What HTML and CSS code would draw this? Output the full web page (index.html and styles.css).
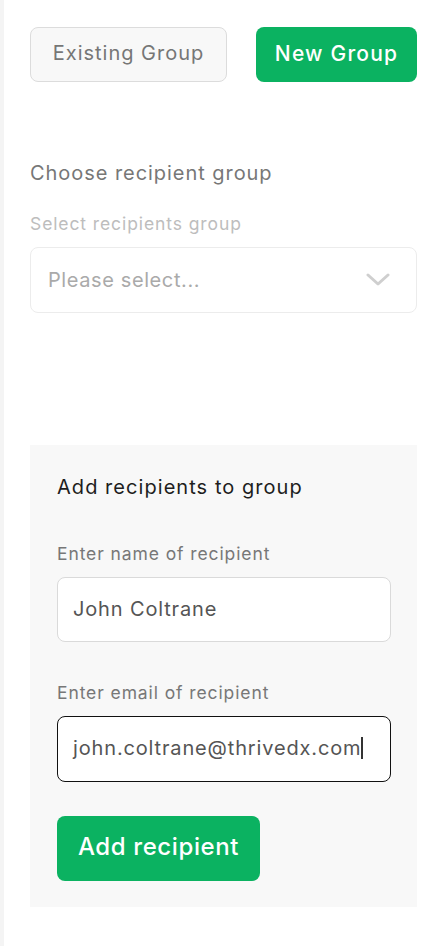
FILE: index.html
```html
<!DOCTYPE html>
<html>
<head>
<meta charset="utf-8">
<link rel="stylesheet" href="styles.css">
</head>
<body>
<div class="edge"></div>
<main class="page">
  <div class="tabs">
    <button class="btn btn-outline">Existing Group</button>
    <button class="btn btn-green">New Group</button>
  </div>
  <section class="choose">
    <h2 class="title">Choose recipient group</h2>
    <label class="hint">Select recipients group</label>
    <div class="select">
      <span class="placeholder">Please select...</span>
      <svg class="chev" width="24" height="14" viewBox="0 0 24 14"><path d="M2 2 L12 11 L22 2" fill="none" stroke="#cfcfcf" stroke-width="3" stroke-linecap="round" stroke-linejoin="round"/></svg>
    </div>
  </section>
  <section class="panel">
    <h3 class="panel-title">Add recipients to group</h3>
    <label class="field-label">Enter name of recipient</label>
    <div class="input">John Coltrane</div>
    <label class="field-label second">Enter email of recipient</label>
    <div class="input focused">john.coltrane@thrivedx.com<span class="caret"></span></div>
    <button class="btn btn-green add">Add recipient</button>
  </section>
</main>
</body>
</html>
```
FILE: styles.css
```css
* { box-sizing: border-box; }
html, body { margin: 0; padding: 0; background: #fff; }
body {
  font-family: "Inter", "Open Sans", sans-serif;
  width: 446px;
  height: 946px;
  position: relative;
  overflow: hidden;
}
.edge {
  position: absolute;
  left: 0; top: 0; bottom: 0;
  width: 4px;
  background: #f4f4f4;
}
.page {
  padding: 27px 29px 0 30px;
  display: flex;
  flex-direction: column;
}
.tabs {
  display: flex;
  justify-content: space-between;
}
.btn {
  font-family: inherit;
  border-radius: 8px;
  font-size: 20px;
  height: 55px;
  cursor: pointer;
  padding: 0 0 3px;
}
.btn-outline {
  width: 197px;
  background: #f8f8f8;
  border: 1px solid #dcdcdc;
  color: #767676;
  font-weight: 400;
  letter-spacing: 1px;
}
.btn-green {
  width: 161px;
  background: #0bb261;
  border: none;
  color: #fff;
  font-weight: 500;
  font-size: 21px;
  letter-spacing: 1.2px;
}
.choose {
  margin-top: 79px;
  display: flex;
  flex-direction: column;
}
.title {
  margin: 0;
  font-size: 20px;
  font-weight: 400;
  color: #777;
  line-height: 24px;
  letter-spacing: 0.95px;
}
.hint {
  margin-top: 28px;
  font-size: 17.5px;
  color: #bdbdbd;
  line-height: 22px;
  letter-spacing: 0.9px;
}
.select {
  margin-top: 12px;
  height: 66px;
  border: 1px solid #ececec;
  border-radius: 8px;
  display: flex;
  align-items: center;
  justify-content: space-between;
  padding: 0 26px 0 17px;
}
.placeholder {
  font-size: 20px;
  color: #aaa;
  letter-spacing: 0.6px;
}
.panel {
  margin-top: 132px;
  background: #f8f8f8;
  padding: 30px 26px 26px 27px;
  display: flex;
  flex-direction: column;
  align-items: flex-start;
  height: 462px;
}
.panel-title {
  margin: 0;
  font-size: 20px;
  font-weight: 400;
  color: #1e1e1e;
  line-height: 24px;
  letter-spacing: 1.05px;
}
.field-label {
  margin-top: 44px;
  font-size: 17.5px;
  color: #777;
  line-height: 22px;
  letter-spacing: 0.9px;
}
.field-label.second { margin-top: 40px; }
.input {
  margin-top: 12px;
  width: 334px;
  height: 66px;
  background: #fff;
  border: 1px solid #dadada;
  border-radius: 8px;
  display: flex;
  align-items: center;
  padding: 0 15px 2px;
  font-size: 20px;
  color: #555;
  letter-spacing: 0.85px;
}
.input.focused {
  border-color: #111;
}
.caret {
  display: inline-block;
  width: 2px;
  height: 22px;
  background: #333;
}
.add.btn-green {
  margin-top: 34px;
  width: 203px;
  height: 66px;
  font-size: 24px;
  letter-spacing: 0.6px;
}
```
